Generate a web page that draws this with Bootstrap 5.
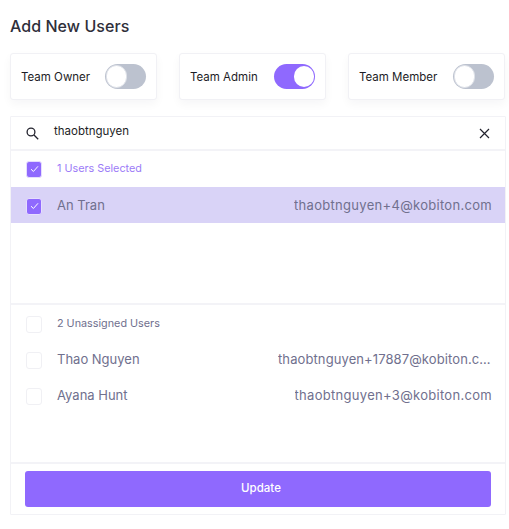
<!DOCTYPE html>
<html lang="en">
<head>
<meta charset="utf-8">
<title>Add New Users</title>
<link href="https://cdn.jsdelivr.net/npm/bootstrap@5.3.0/dist/css/bootstrap.min.css" rel="stylesheet">
<style>
html,body{height:100%;background:#fff;}
body{font-family:Inter,"Liberation Sans",sans-serif;width:509px;height:529px;overflow:hidden;}
.pagewrap{padding:16px 3px 0 10px;}
.ttl{font-size:16px;line-height:20px;font-weight:500;color:#2f2f3a;margin:0 0 17px;letter-spacing:.05px;}
.rolerow{display:flex;justify-content:space-between;margin:0 1px 16px 0;}
.rolecard{height:47px;background:#fff;border:1px solid #f1f1f5;border-radius:3px;box-shadow:0 4px 10px rgba(30,30,60,.04);display:flex;align-items:center;justify-content:space-between;padding:0 10px;width:147px;font-size:11.5px;color:#1d1d26;}
.rolecard.wide{width:157px;}
.rolelbl{padding-top:2px;}
.tog{width:41px;height:25px;border-radius:13px;background:#bcc2cf;position:relative;flex:none;}
.tog::after{content:"";position:absolute;left:1px;top:1px;width:21px;height:23px;border-radius:12px;background:#fff;border:1px solid #dfe2e9;}
.tog.on{background:#8f69fe;}
.tog.on::after{left:20px;top:2px;width:20px;height:21px;border:0;}
.panelbox{border:1px solid #f2f2f6;border-radius:1px;height:399px;display:flex;flex-direction:column;}
.searchrow{height:34px;display:flex;align-items:center;padding:0 15px 0 15px;border-bottom:2px solid #f3f3f7;font-size:11.5px;color:#1d1d26;flex:none;}
.searchtxt{flex:1;margin-left:15px;margin-top:-2px;}
.urow{display:flex;align-items:center;padding:0 13px 0 15px;height:36px;flex:none;color:#70708e;font-size:13px;}
.nudge{padding-top:2px;}
.chk{width:16px;height:17px;border-radius:3px;border:1px solid #f0f0f4;background:#fff;flex:none;margin-right:15px;display:flex;align-items:center;justify-content:center;}
.chk.on{background:#8f69fe;border-color:#e6defe;}
.uname{flex:1;white-space:nowrap;}
.umail{max-width:214px;overflow:hidden;text-overflow:ellipsis;white-space:nowrap;text-align:right;letter-spacing:.3px;}
.umail.longmail{letter-spacing:.1px;}
.hdr{font-size:10.8px;height:36px;}
.hdr.sel{color:#9c7bf7;}
.selrow{background:#d9d3f7;height:36px;}
.gapone{height:82px;flex:none;border-bottom:2px solid #f3f3f7;}
.gaptwo{flex:1;}
.foot{border-top:2px solid #f3f3f7;padding:7px 14px;flex:none;}
.updbtn{display:block;width:100%;height:36px;background:#8f69fe;border:0;border-radius:3px;color:#fff;font-size:11.5px;font-weight:500;padding:0 0 0 6px;}
.updbtn:hover{background:#8f69fe;color:#fff;}
</style>
</head>
<body>
<div class="pagewrap">
  <h1 class="ttl">Add New Users</h1>
  <div class="rolerow">
    <div class="rolecard"><span class="rolelbl">Team Owner</span><span class="tog"></span></div>
    <div class="rolecard"><span class="rolelbl">Team Admin</span><span class="tog on"></span></div>
    <div class="rolecard wide"><span class="rolelbl">Team Member</span><span class="tog"></span></div>
  </div>
  <div class="panelbox">
    <div class="searchrow">
      <svg width="13" height="13" viewBox="0 0 13 13" fill="none" stroke="#23232e" stroke-width="1.3"><circle cx="5" cy="5" r="3.9"/><path d="M8 8l4.2 4.2"/></svg>
      <span class="searchtxt">thaobtnguyen</span>
      <svg width="11" height="11" viewBox="0 0 11 11" fill="none" stroke="#23232e" stroke-width="1.2"><path d="M1 1l9 9M10 1l-9 9"/></svg>
    </div>
    <div class="urow hdr sel">
      <span class="chk on"><svg width="9" height="8" viewBox="0 0 9 8" fill="none" stroke="#fff" stroke-width="1"><path d="M1 4.2l2.4 2.3L8 1.3"/></svg></span>
      <span class="uname">1 Users Selected</span>
    </div>
    <div class="urow selrow nudge">
      <span class="chk on"><svg width="9" height="8" viewBox="0 0 9 8" fill="none" stroke="#fff" stroke-width="1"><path d="M1 4.2l2.4 2.3L8 1.3"/></svg></span>
      <span class="uname">An Tran</span>
      <span class="umail">thaobtnguyen+4@kobiton.com</span>
    </div>
    <div class="gapone"></div>
    <div class="urow hdr nudge">
      <span class="chk"></span>
      <span class="uname">2 Unassigned Users</span>
    </div>
    <div class="urow nudge">
      <span class="chk"></span>
      <span class="uname">Thao Nguyen</span>
      <span class="umail longmail">thaobtnguyen+17887@kobiton.com</span>
    </div>
    <div class="urow nudge">
      <span class="chk"></span>
      <span class="uname">Ayana Hunt</span>
      <span class="umail">thaobtnguyen+3@kobiton.com</span>
    </div>
    <div class="gaptwo"></div>
    <div class="foot"><button type="button" class="btn updbtn">Update</button></div>
  </div>
</div>
<script src="https://cdn.jsdelivr.net/npm/bootstrap@5.3.0/dist/js/bootstrap.bundle.min.js"></script>
</body>
</html>
